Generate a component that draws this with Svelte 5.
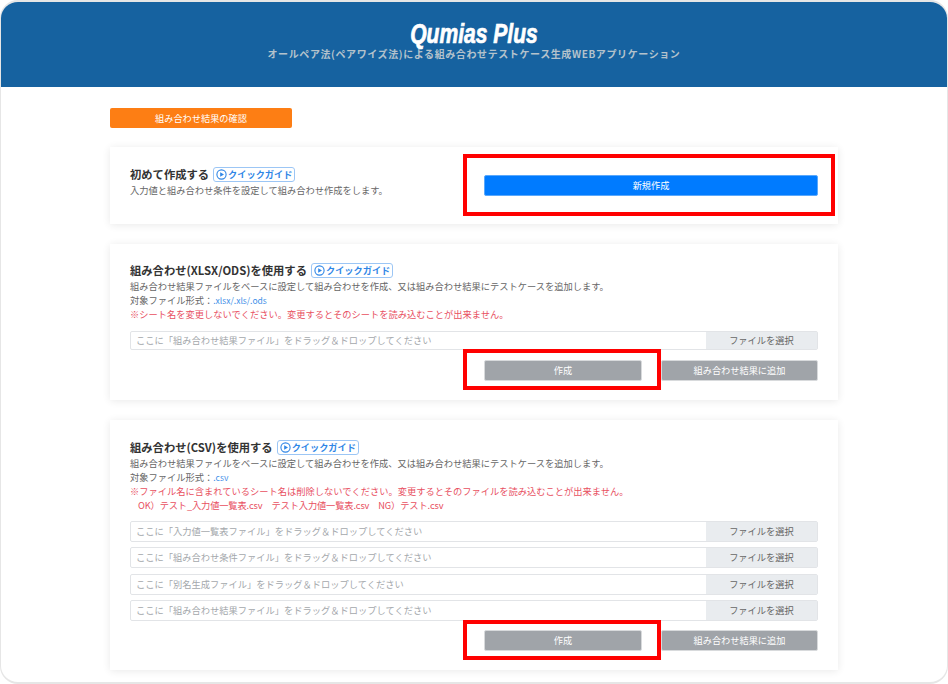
<script>
	const guide = "クイックガイド";
	const csvFiles = ["入力値一覧表ファイル", "組み合わせ条件ファイル", "別名生成ファイル", "組み合わせ結果ファイル"];
</script>

{#snippet guideLink()}
	<span class="guide">
		<svg width="11" height="11" viewBox="0 0 11 11">
			<circle cx="5.5" cy="5.5" r="4.6" fill="none" stroke="#2f86e6" stroke-width="1.1" />
			<path d="M4.2 3.2 L8 5.5 L4.2 7.8 Z" fill="#2f86e6" />
		</svg>{guide}
	</span>
{/snippet}

{#snippet fileRow(name)}
	<div class="file">
		<div class="drop">ここに「{name}」をドラッグ＆ドロップしてください</div>
		<div class="pick">ファイルを選択</div>
	</div>
{/snippet}

<div class="frame">
	<header>
		<h1>Qumias Plus</h1>
		<p>オールペア法(ペアワイズ法)による組み合わせテストケース生成WEBアプリケーション</p>
	</header>

	<main>
		<div class="check">組み合わせ結果の確認</div>

		<section class="card first">
			<div class="intro">
				<h2>初めて作成する {@render guideLink()}</h2>
				<p>入力値と組み合わせ条件を設定して組み合わせ作成をします。</p>
			</div>
			<div class="btn-wrap new-wrap">
				<button class="btn primary">新規作成</button>
			</div>
		</section>

		<section class="card xlsx">
			<h2>組み合わせ(XLSX/ODS)を使用する {@render guideLink()}</h2>
			<p>組み合わせ結果ファイルをベースに設定して組み合わせを作成、又は組み合わせ結果にテストケースを追加します。</p>
			<p>対象ファイル形式：<span class="ext">.xlsx/.xls/.ods</span></p>
			<p class="warn">※シート名を変更しないでください。変更するとそのシートを読み込むことが出来ません。</p>
			<div class="files">
				{@render fileRow("組み合わせ結果ファイル")}
			</div>
			<div class="actions">
				<div class="btn-wrap mark-a"><button class="btn wide">作成</button></div>
				<button class="btn">組み合わせ結果に追加</button>
			</div>
		</section>

		<section class="card csv">
			<h2>組み合わせ(CSV)を使用する {@render guideLink()}</h2>
			<p>組み合わせ結果ファイルをベースに設定して組み合わせを作成、又は組み合わせ結果にテストケースを追加します。</p>
			<p>対象ファイル形式：<span class="ext">.csv</span></p>
			<p class="warn">※ファイル名に含まれているシート名は削除しないでください。変更するとそのファイルを読み込むことが出来ません。</p>
			<p class="warn sample">OK）テスト_入力値一覧表.csv　テスト入力値一覧表.csv　NG）テスト.csv</p>
			<div class="files">
				{#each csvFiles as name}
					{@render fileRow(name)}
				{/each}
			</div>
			<div class="actions">
				<div class="btn-wrap mark-b"><button class="btn wide">作成</button></div>
				<button class="btn">組み合わせ結果に追加</button>
			</div>
		</section>
	</main>
</div>

<style>
:global(body) {
	margin: 0;
	background: #fff;
}

.frame {
	box-sizing: border-box;
	width: 948px;
	height: 684px;
	overflow: hidden;
	background: #fff;
	border: solid 2px #e6e6e6;
	border-width: 2px 1px;
	border-radius: 18px;
	font-family: "Noto Sans CJK JP", "Noto Sans", sans-serif;
	color: #555;
}

header {
	height: 85px;
	background: #1662a0;
	text-align: center;
	overflow: hidden;
}
h1 {
	margin: 18px 0 0;
	font-family: "Liberation Sans", sans-serif;
	font-size: 27px;
	line-height: 28px;
	font-style: italic;
	font-weight: 700;
	color: #fff;
	transform: scaleX(0.78);
	-webkit-text-stroke: 0.7px #fff;
}
header p {
	margin: -1px 0 0;
	font-size: 10px;
	line-height: 14px;
	font-weight: 700;
	letter-spacing: 0.6px;
	color: #b4c2cc;
}

main {
	padding: 21px 109px 0;
}

.check {
	width: 182px;
	height: 20px;
	background: #fd7e14;
	color: #fff;
	border-radius: 2px;
	font-size: 9.2px;
	line-height: 20px;
	text-align: center;
}

.card {
	box-sizing: border-box;
	width: 728px;
	background: #fff;
	box-shadow: 0 1px 8px rgba(0, 0, 0, 0.09);
	padding: 0 20px;
}
.first {
	height: 77px;
	margin-top: 19px;
	display: flex;
	align-items: center;
	justify-content: space-between;
}
.xlsx {
	height: 156px;
	margin-top: 20px;
	padding-top: 19px;
}
.csv {
	height: 250px;
	margin-top: 20px;
	padding-top: 20px;
}

h2 {
	margin: 0;
	font-size: 11.3px;
	line-height: 15px;
	font-weight: 700;
	color: #333;
	display: flex;
	align-items: center;
	gap: 4px;
}
.card p {
	margin: 0;
	font-size: 9.25px;
	line-height: 14px;
	color: #666;
}
.xlsx h2, .csv h2 {
	margin-bottom: 1px;
}
.intro h2 {
	margin-bottom: 1px;
}
.intro {
	margin-top: -8px;
}
.guide {
	display: inline-flex;
	align-items: center;
	height: 13px;
	padding: 0 2px;
	border: 1px solid #9cc6f5;
	border-radius: 3px;
	font-size: 9.2px;
	font-weight: 700;
	color: #2f86e6;
}
.guide svg {
	margin-right: 1px;
}
.ext {
	font-size: 8.5px;
	color: #3f8fe8;
}
.card p.warn {
	color: #e8505f;
}
.card p.sample {
	padding-left: 8px;
	letter-spacing: -0.15px;
}

.files {
	display: flex;
	flex-direction: column;
	gap: 5.3px;
	margin-top: 10px;
}
.csv .files {
	margin-top: 9px;
}
.file {
	display: flex;
	height: 21px;
	box-sizing: border-box;
	border: 1px solid #e2e4e7;
	border-radius: 2px;
	font-size: 9.25px;
	line-height: 19px;
}
.xlsx .file {
	height: 19px;
	line-height: 17px;
}
.drop {
	flex: 1;
	padding-left: 5px;
	color: #a4a8ac;
}
.pick {
	width: 111px;
	background: #e9ecef;
	color: #666;
	text-align: center;
}

.actions {
	display: flex;
	justify-content: flex-end;
	gap: 19px;
	margin-top: 10px;
}
.csv .actions {
	margin-top: 9px;
}
.btn {
	display: block;
	box-sizing: border-box;
	width: 157px;
	height: 21px;
	padding: 0;
	border: 1px solid #d8dadc;
	border-radius: 2px;
	background: #a0a4a9;
	color: #fff;
	font-family: inherit;
	font-size: 9.2px;
	line-height: 19px;
	text-align: center;
}
.btn.wide {
	width: 158px;
}
.btn.primary {
	width: 334px;
	background: #007bff;
	border-color: #5aa8fb;
}

.btn-wrap {
	position: relative;
}
.btn-wrap::after {
	content: "";
	position: absolute;
	border: 4px solid #f00;
	pointer-events: none;
}
.new-wrap::after {
	inset: -21px -17px -20px -21px;
}
.mark-a::after {
	inset: -11px -19px -9px -21px;
}
.mark-b::after {
	inset: -10px -19px -9px -21px;
}
</style>
